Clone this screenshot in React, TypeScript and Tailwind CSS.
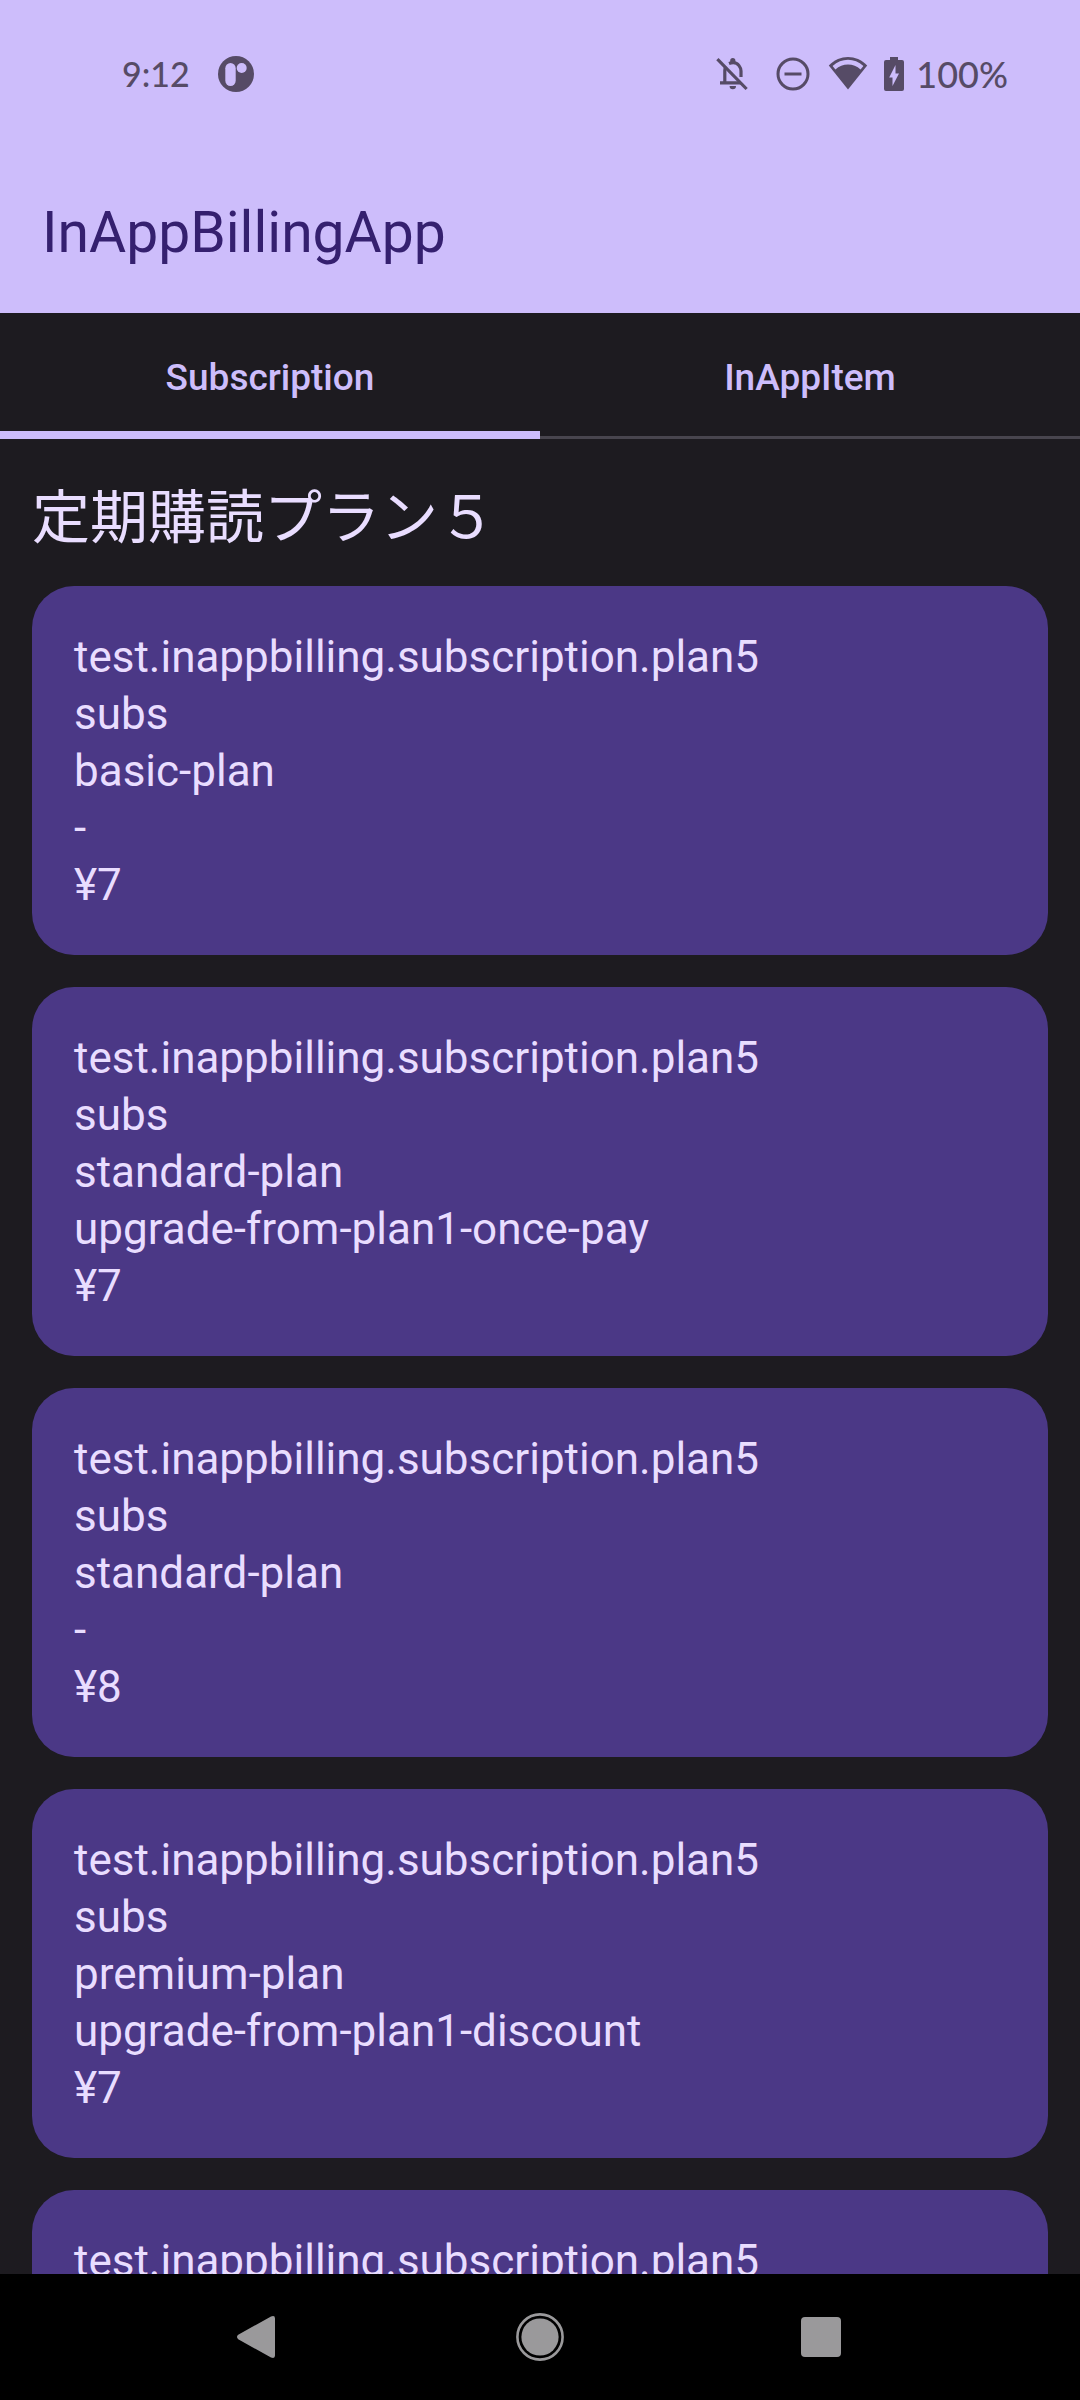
import React from "react";

type Plan = { plan?: string; offer?: string; price?: string };

const plans: Plan[] = [
  { plan: "basic-plan", offer: "-", price: "¥7" },
  { plan: "standard-plan", offer: "upgrade-from-plan1-once-pay", price: "¥7" },
  { plan: "standard-plan", offer: "-", price: "¥8" },
  { plan: "premium-plan", offer: "upgrade-from-plan1-discount", price: "¥7" },
  {},
];

function StatusBar() {
  return (
    <div className="flex h-[148px] items-center justify-between pr-[72px] pl-[122px] font-['Lato',sans-serif] text-[36px] leading-none font-medium text-[#564b66]">
      <div className="flex items-center gap-7">
        <span className="text-[34px]">9:12</span>
        <svg className="size-9" viewBox="0 0 36 36" role="img" aria-label="Notification">
          <circle cx="18" cy="18" r="18" fill="currentColor" />
          <rect x="7.3" y="7" width="10.4" height="23" rx="5.2" fill="#cdbdfb" />
          <circle cx="23.7" cy="12" r="5" fill="#cdbdfb" />
        </svg>
      </div>
      <div className="flex items-center">
        <svg className="h-9 w-8" viewBox="0 0 32 36" fill="none" stroke="currentColor" strokeWidth="3.2" role="img" aria-label="Notifications silenced">
          <path d="M1.4 3.2 30.6 33" />
          <path d="M4 26.8h21M8.8 26V14.5q0-2 .8-4" />
          <path d="M13 7.6q6.5-2.6 10 2 2 2.600 2 5.400V21" />
          <path d="M14.200 7V4.500a2.600 2.600 0 0 1 5.200 0V7ZM13.600 30H20a3.200 3.200 0 0 1-6.400 0Z" fill="currentColor" stroke="none" />
        </svg>
        <svg className="ml-7 h-9 w-[34px]" viewBox="0 0 34 36" fill="none" stroke="currentColor" strokeWidth="3" role="img" aria-label="Do not disturb">
          <circle cx="17" cy="18" r="15" />
          <path d="M8.5 18h17" />
        </svg>
        <svg className="ml-[18px] h-9 w-10" viewBox="0 0 40 36" role="img" aria-label="Wi-Fi">
          <path d="M.8 9.500C12-1.800 28-1.800 39.200 9.500L20 33.500Z" fill="currentColor" />
          <path d="M4.600 10C13.500 1.800 26.500 1.800 35.400 10L32.600 13.500C25.500 6.800 14.500 6.800 7.400 13.500Z" fill="#cdbdfb" />
        </svg>
        <svg className="ml-4 h-9 w-5" viewBox="0 0 20 36" role="img" aria-label="Battery charging">
          <path d="M6 1h8v3h4a2 2 0 0 1 2 2v27a2 2 0 0 1-2 2H2a2 2 0 0 1-2-2V6a2 2 0 0 1 2-2h4Z" fill="currentColor" />
          <path d="M11.500 9v8.500H15L8.500 30V21.500H5.200Z" fill="#cdbdfb" />
        </svg>
        <span className="ml-3">100%</span>
      </div>
    </div>
  );
}

function PlanCard({ plan, offer, price }: Plan) {
  return (
    <li className="rounded-[42px] bg-[#4b3886] px-[42px] pt-[43px] pb-[41px] text-[44px] leading-[57px]">
      <p>test.inappbilling.subscription.plan5</p>
      {plan && (
        <>
          <p>subs</p>
          <p>{plan}</p>
          <p>{offer}</p>
          <p>{price}</p>
        </>
      )}
    </li>
  );
}

export default function App() {
  const [tab, setTab] = React.useState("Subscription");
  return (
    <div className="flex h-screen flex-col overflow-hidden bg-[#1d1b20] font-['Roboto','Noto_Sans_CJK_JP',sans-serif] text-[#e9ddff]">
      <header className="shrink-0 bg-[#cdbdfb]">
        <StatusBar />
        <h1 className="flex h-[165px] items-center px-[42px] pt-1 text-[57px] text-[#35206f]">InAppBillingApp</h1>
      </header>
      <div role="tablist" className="grid h-[126px] shrink-0 grid-cols-2 text-[37px] font-medium text-[#cdbdfb]">
        {["Subscription", "InAppItem"].map((name) => (
          <button
            key={name}
            type="button"
            role="tab"
            aria-selected={tab === name}
            onClick={() => setTab(name)}
            className={
              tab === name
                ? "relative flex items-center justify-center pt-1 after:absolute after:inset-x-0 after:bottom-0 after:h-2 after:bg-[#cdbdfb]"
                : "relative flex items-center justify-center pt-1 after:absolute after:inset-x-0 after:bottom-0 after:h-[3px] after:bg-[#48454e]"
            }
          >
            {name}
          </button>
        ))}
      </div>
      <main className="min-h-0 flex-1 overflow-hidden px-8">
        <h2 className="flex h-[147px] items-center pt-3 text-[58px]">定期購読プラン５</h2>
        <ul className="flex flex-col gap-8">
          {plans.map((p, i) => (
            <PlanCard key={i} {...p} />
          ))}
        </ul>
      </main>
      <nav className="flex h-[126px] shrink-0 items-center justify-center gap-[234px] bg-black text-[#9a999b]">
        <button type="button" aria-label="Back">
          <svg className="size-12" viewBox="0 0 48 48" fill="currentColor">
            <path d="M4.200 21.800 37 3.500q4-1.600 4 2v37q0 3.600-4 2L4.200 26.200q-2.400-2.200 0-4.400Z" />
          </svg>
        </button>
        <button type="button" aria-label="Home">
          <svg className="size-12" viewBox="0 0 48 48">
            <circle cx="24" cy="24" r="22.6" fill="none" stroke="currentColor" strokeWidth="2.6" />
            <circle cx="24" cy="24" r="18.6" fill="currentColor" />
          </svg>
        </button>
        <button type="button" aria-label="Recent apps">
          <svg className="size-12" viewBox="0 0 48 48" fill="currentColor">
            <rect x="3" y="4" width="40" height="40" rx="4" />
          </svg>
        </button>
      </nav>
    </div>
  );
}
